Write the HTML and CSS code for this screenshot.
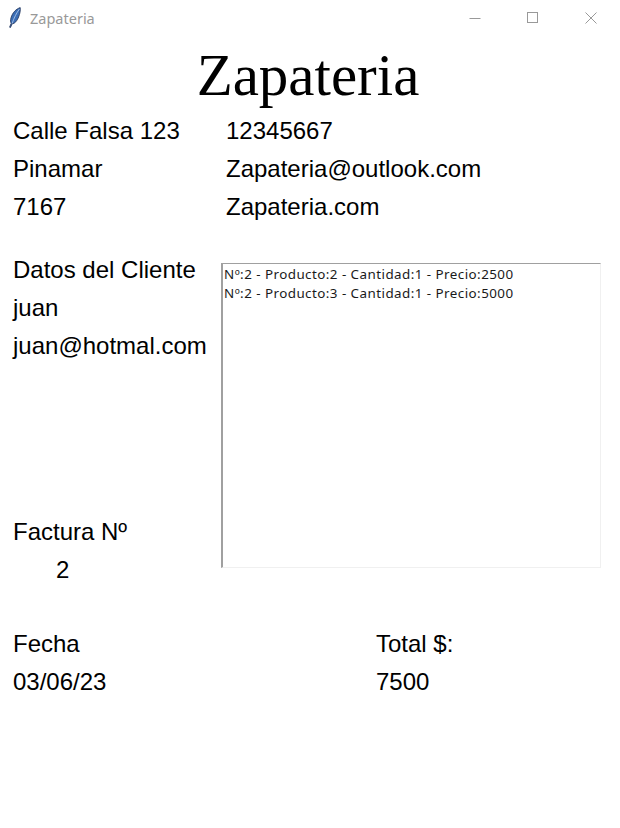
FILE: index.html
```html
<!DOCTYPE html>
<html lang="es">
<head>
<meta charset="utf-8">
<title>Zapateria</title>
<link rel="stylesheet" href="styles.css">
</head>
<body>
<div class="window">
  <header class="titlebar">
    <svg class="app-icon" width="13" height="21" viewBox="0 0 13 21">
      <path d="M12.2 0.6 C8 2 4.4 5.8 3 10.8 C2.3 13.2 2.5 15.2 3.2 16.3 L1.6 20.2 L2.5 20.5 L4.1 16.8 C6.6 16.8 9.1 13.9 10.6 10 C11.9 6.7 12.6 3.4 12.2 0.6 Z" fill="#3b6db4" stroke="#1d2f55" stroke-width="0.8"/>
      <path d="M11.3 2.2 C8.6 5.8 6.2 10.5 4.1 16.5" fill="none" stroke="#c9dbf3" stroke-width="0.7"/>
    </svg>
    <span class="win-title">Zapateria</span>
    <div class="controls">
      <span class="ctl"><svg width="12" height="12" viewBox="0 0 12 12"><path d="M0.5 6.5 H11.5" stroke="#999" stroke-width="1"/></svg></span>
      <span class="ctl"><svg width="12" height="12" viewBox="0 0 12 12"><rect x="0.5" y="0.5" width="10" height="10" fill="none" stroke="#999" stroke-width="1"/></svg></span>
      <span class="ctl"><svg width="12" height="12" viewBox="0 0 12 12"><path d="M0.5 0.5 L11.5 11.5 M11.5 0.5 L0.5 11.5" stroke="#999" stroke-width="1"/></svg></span>
    </div>
  </header>

  <main class="content">
    <h1 class="store-name">Zapateria</h1>

    <div class="info-grid">
      <span>Calle Falsa 123</span><span>12345667</span>
      <span>Pinamar</span><span>Zapateria@outlook.com</span>
      <span>7167</span><span>Zapateria.com</span>
    </div>

    <section class="client-section">
      <div class="client-col">
        <div class="row">Datos del Cliente</div>
        <div class="row">juan</div>
        <div class="row">juan@hotmal.com</div>
        <div class="row invoice-label">Factura Nº</div>
        <div class="row invoice-num">2</div>
      </div>
      <div class="listbox">
        <div class="item">Nº:2 - Producto:2 - Cantidad:1 - Precio:2500</div>
        <div class="item">Nº:2 - Producto:3 - Cantidad:1 - Precio:5000</div>
      </div>
    </section>

    <section class="footer-grid">
      <span>Fecha</span><span>Total $:</span>
      <span>03/06/23</span><span>7500</span>
    </section>
  </main>
</div>
</body>
</html>
```

FILE: styles.css
```css
* { box-sizing: border-box; }
html, body { margin: 0; padding: 0; background: #ffffff; }
body {
  width: 620px;
  height: 828px;
  overflow: hidden;
  font-family: "Liberation Sans", Arial, sans-serif;
  color: #000;
}
.titlebar {
  height: 30px;
  display: flex;
  align-items: center;
  background: #fff;
}
.app-icon { margin-left: 8px; margin-top: 5px; }
.win-title {
  margin-left: 9px;
  font-family: "Noto Sans", "Open Sans", sans-serif;
  font-size: 14.5px;
  color: #999;
  margin-top: 6px;
}
.controls { margin-left: auto; display: flex; }
.ctl {
  width: 58px;
  height: 30px;
  display: flex;
  align-items: center;
  justify-content: center;
  margin-top: 6px;
}
.content { padding: 0 0 0 13px; }
.store-name {
  margin: 13px 0 5px 0;
  font-family: "Liberation Serif", "Times New Roman", serif;
  font-weight: normal;
  font-size: 59px;
  line-height: 64px;
  text-align: center;
  padding-right: 17px;
}
.info-grid {
  display: grid;
  grid-template-columns: 213px auto;
  font-size: 24px;
  line-height: 38px;
}
.client-section {
  display: flex;
  margin-top: 25px;
  align-items: flex-start;
}
.client-col {
  width: 208px;
  font-size: 24px;
  line-height: 38px;
}
.invoice-label { margin-top: 148px; }
.invoice-num { padding-left: 43px; }
.listbox {
  margin-top: 12px;
  width: 380px;
  height: 305px;
  border-style: solid;
  border-width: 1px 1px 1px 2px;
  border-color: #a0a0a0 #f0f0f0 #f0f0f0 #a0a0a0;
  padding: 1px 0 0 1px;
  font-family: "Noto Sans", "Open Sans", sans-serif;
  font-size: 13.4px;
  letter-spacing: 0.45px;
  line-height: 19px;
  color: #1a1a1a;
}
.item { white-space: nowrap; }
.footer-grid {
  display: grid;
  grid-template-columns: 363px auto;
  margin-top: 36px;
  font-size: 24px;
  line-height: 38px;
}
```
